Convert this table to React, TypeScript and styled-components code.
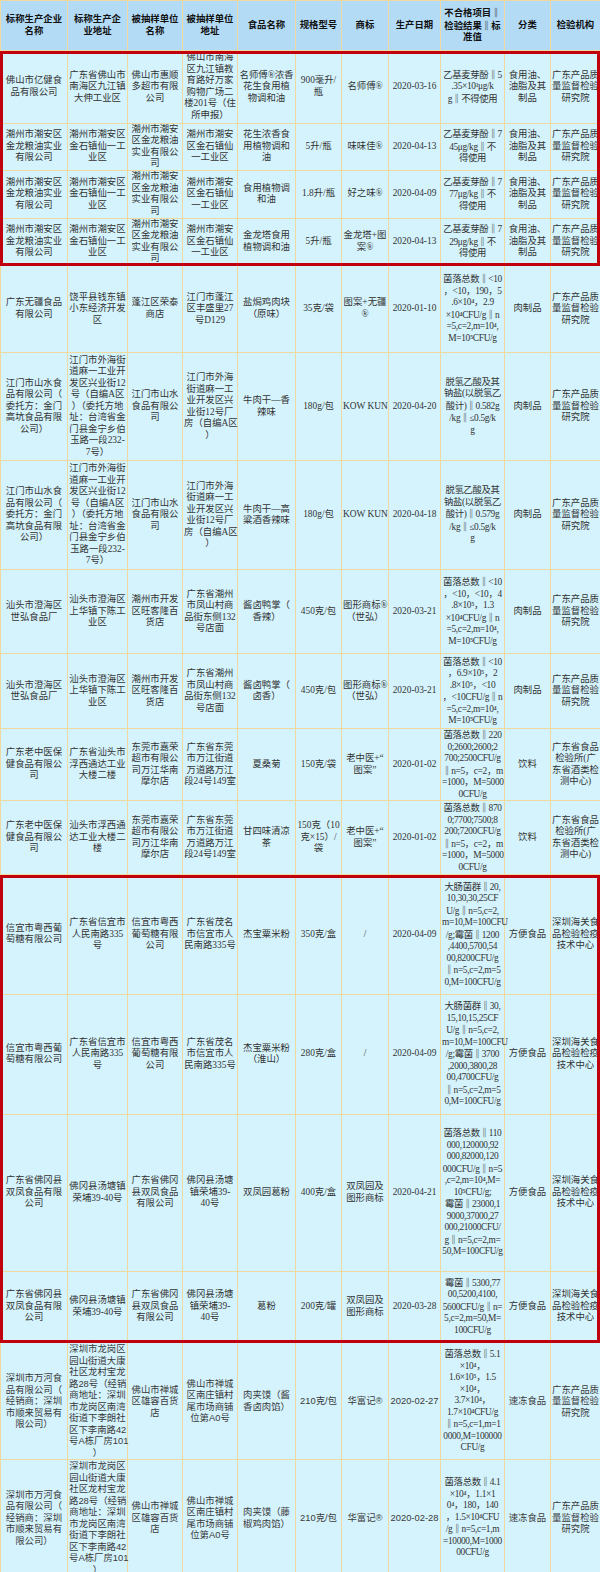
import React from "react";
import styled, { createGlobalStyle, css } from "styled-components";

const GlobalStyle = createGlobalStyle`
  html,
  body {
    margin: 0;
    padding: 0;
    background: #ffffff;
  }
`;

const COLUMNS = [67, 60, 55, 55, 58, 46, 47, 52, 64, 46, 50];
const RESULT_COL = 8;

const HEADINGS = [
  "标称生产企业\n名称",
  "标称生产企\n业地址",
  "被抽样单位\n名称",
  "被抽样单位\n地址",
  "食品名称",
  "规格型号",
  "商标",
  "生产日期",
  "不合格项目‖\n检验结果‖标\n准值",
  "分类",
  "检验机构",
];

// cell texts keep the line breaks of the published sheet
const GDQI = "广东产品质\n量监督检验\n研究院";
const SZCIQ = "深圳海关食\n品检验检疫\n技术中心";
const OIL = "食用油、\n油脂及其\n制品";
const MEAT = "肉制品";
const JL_NAME = "潮州市潮安区\n金龙粮油实业\n有限公司";
const JL_ADDR = "潮州市潮安区\n金石镇仙一工\n业区";
const JL_SITE_NAME = "潮州市潮安\n区金龙粮油\n实业有限公\n司";
const JL_SITE = "潮州市潮安\n区金石镇仙\n一工业区";
const SS_NAME = "江门市山水食\n品有限公司（\n委托方：金门\n高坑食品有限\n公司）";
const SS_ADDR =
  "江门市外海街\n道麻一工业开\n发区兴业街12\n号（自编A区\n）（委托方地\n址：台湾省金\n门县金宁乡伯\n玉路一段232-\n7号）";
const SS_SITE_NAME = "江门市山水\n食品有限公\n司";
const SS_SITE = "江门市外海\n街道麻一工\n业开发区兴\n业街12号厂\n房（自编A区\n）";
const SH_NAME = "汕头市澄海区\n世弘食品厂";
const SH_ADDR = "汕头市澄海区\n上华镇下陈工\n业区";
const WKL = "潮州市开发\n区旺客隆百\n货店";
const WKL_ADDR = "广东省潮州\n市凤山村商\n品街东侧132\n号店面";
const LZY = "广东老中医保\n健食品有限公\n司";
const JR = "东莞市嘉荣\n超市有限公\n司万江华南\n摩尔店";
const JR_ADDR = "广东省东莞\n市万江街道\n万道路万江\n段24号149室";
const GDFI = "广东省食品\n检验所(广\n东省酒类检\n测中心)";
const XY = "信宜市粤西葡\n萄糖有限公司";
const XY_ADDR = "广东省信宜市\n人民南路335\n号";
const XY_SITE_NAME = "信宜市粤西\n葡萄糖有限\n公司";
const XY_SITE = "广东省茂名\n市信宜市人\n民南路335号";
const SF = "广东省佛冈县\n双凤食品有限\n公司";
const SF_ADDR = "佛冈县汤塘镇\n荣埔39-40号";
const SF_SITE_NAME = "广东省佛冈\n县双凤食品\n有限公司";
const SF_SITE = "佛冈县汤塘\n镇荣埔39-\n40号";
const WH = "深圳市万河食\n品有限公司（\n经销商：深圳\n市顺来贸易有\n限公司）";
const WH_ADDR =
  "深圳市龙岗区\n园山街道大康\n社区龙村宝龙\n路28号（经销\n商地址：深圳\n市龙岗区南湾\n街道下李朗社\n区下李南路42\n号A栋厂房101\n）";
const XR = "佛山市禅城\n区雄容百货\n店";
const XR_ADDR = "佛山市禅城\n区南庄镇村\n尾市场商铺\n位第A0号";

interface Record {
  h: number;
  cells: string[];
  sans?: boolean;
}

interface Group {
  flagged?: boolean;
  rows: Record[];
}

const GROUPS: Group[] = [
  {
    flagged: true,
    rows: [
      {
        h: 72,
        cells: [
          "佛山市亿健食\n品有限公司",
          "广东省佛山市\n南海区九江镇\n大伸工业区",
          "佛山市惠顺\n多超市有限\n公司",
          "佛山市南海\n区九江镇教\n育路好万家\n购物广场二\n楼201号（住\n所申报）",
          "名师傅®浓香\n花生食用植\n物调和油",
          "900毫升/\n瓶",
          "名师傅®",
          "2020-03-16",
          "乙基麦芽酚‖5\n.35×10³μg/k\ng‖不得使用",
          OIL,
          GDQI,
        ],
      },
      {
        h: 47,
        cells: [JL_NAME, JL_ADDR, JL_SITE_NAME, JL_SITE, "花生浓香食\n用植物调和\n油", "5升/瓶", "味味佳®", "2020-04-13", "乙基麦芽酚‖7\n45μg/kg‖不\n得使用", OIL, GDQI],
      },
      {
        h: 48,
        cells: [JL_NAME, JL_ADDR, JL_SITE_NAME, JL_SITE, "食用植物调\n和油", "1.8升/瓶", "好之味®", "2020-04-09", "乙基麦芽酚‖7\n77μg/kg‖不\n得使用", OIL, GDQI],
      },
      {
        h: 47,
        cells: [JL_NAME, JL_ADDR, JL_SITE_NAME, JL_SITE, "金龙塔食用\n植物调和油", "5升/瓶", "金龙塔+图\n案®", "2020-04-13", "乙基麦芽酚‖7\n29μg/kg‖不\n得使用", OIL, GDQI],
      },
    ],
  },
  {
    rows: [
      {
        h: 87,
        cells: [
          "广东无疆食品\n有限公司",
          "饶平县钱东镇\n小东经济开发\n区",
          "蓬江区荣泰\n商店",
          "江门市蓬江\n区丰盛里27\n号D129",
          "盐焗鸡肉块\n（原味）",
          "35克/袋",
          "图案+无疆\n®",
          "2020-01-10",
          "菌落总数‖<10\n，<10，190，5\n.6×10⁴，2.9\n×10⁴CFU/g‖n\n=5,c=2,m=10⁴,\nM=10⁵CFU/g",
          MEAT,
          GDQI,
        ],
      },
      {
        h: 108,
        cells: [SS_NAME, SS_ADDR, SS_SITE_NAME, SS_SITE, "牛肉干—香\n辣味", "180g/包", "KOW KUN", "2020-04-20", "脱氢乙酸及其\n钠盐(以脱氢乙\n酸计)‖0.582g\n/kg‖≤0.5g/k\ng", MEAT, GDQI],
      },
      {
        h: 109,
        cells: [SS_NAME, SS_ADDR, SS_SITE_NAME, SS_SITE, "牛肉干—高\n粱酒香辣味", "180g/包", "KOW KUN", "2020-04-18", "脱氢乙酸及其\n钠盐(以脱氢乙\n酸计)‖0.579g\n/kg‖≤0.5g/k\ng", MEAT, GDQI],
      },
      {
        h: 84,
        cells: [SH_NAME, SH_ADDR, WKL, WKL_ADDR, "酱卤鸭掌（\n香辣）", "450克/包", "图形商标®\n（世弘）", "2020-03-21", "菌落总数‖<10\n，<10，<10，4\n.8×10⁵，1.3\n×10⁴CFU/g‖n\n=5,c=2,m=10⁴,\nM=10⁵CFU/g", MEAT, GDQI],
      },
      {
        h: 75,
        cells: [SH_NAME, SH_ADDR, WKL, WKL_ADDR, "酱卤鸭掌（\n卤香）", "450克/包", "图形商标®\n（世弘）", "2020-03-21", "菌落总数‖<10\n，6.9×10⁵，2\n.8×10⁵，<10\n，<10CFU/g‖n\n=5,c=2,m=10⁴,\nM=10⁵CFU/g", MEAT, GDQI],
      },
      {
        h: 71,
        cells: [LZY, "广东省汕头市\n浮西通达工业\n大楼二楼", JR, JR_ADDR, "夏桑菊", "150克/袋", "老中医+“\n图案”", "2020-01-02", "菌落总数‖220\n0;2600;2600;2\n700;2500CFU/g\n‖n=5，c=2，m\n=1000，M=5000\n0CFU/g", "饮料", GDFI],
      },
      {
        h: 74,
        cells: [LZY, "汕头市浮西通\n达工业大楼二\n楼", JR, JR_ADDR, "甘四味清凉\n茶", "150克（10\n克×15）/\n袋", "老中医+“\n图案”", "2020-01-02", "菌落总数‖870\n0;7700;7500;8\n200;7200CFU/g\n‖n=5，c=2，m\n=1000，M=5000\n0CFU/g", "饮料", GDFI],
      },
    ],
  },
  {
    flagged: true,
    rows: [
      {
        h: 119,
        cells: [XY, XY_ADDR, XY_SITE_NAME, XY_SITE, "杰宝粟米粉", "350克/盒", "/", "2020-04-09", "大肠菌群‖20,\n10,30,30,25CF\nU/g‖n=5,c=2,\nm=10,M=100CFU\n/g;霉菌‖1200\n,4400,5700,54\n00,8200CFU/g\n‖n=5,c=2,m=5\n0,M=100CFU/g", "方便食品", SZCIQ],
      },
      {
        h: 120,
        cells: [XY, XY_ADDR, XY_SITE_NAME, XY_SITE, "杰宝粟米粉\n（淮山）", "280克/盒", "/", "2020-04-09", "大肠菌群‖30,\n15,10,15,25CF\nU/g‖n=5,c=2,\nm=10,M=100CFU\n/g;霉菌‖3700\n,2000,3800,28\n00,4700CFU/g\n‖n=5,c=2,m=5\n0,M=100CFU/g", "方便食品", SZCIQ],
      },
      {
        h: 157,
        cells: [SF, SF_ADDR, SF_SITE_NAME, SF_SITE, "双凤园葛粉", "400克/盒", "双凤园及\n图形商标", "2020-04-21", "菌落总数‖110\n000,120000,92\n000,82000,120\n000CFU/g‖n=5\n,c=2,m=10⁴,M=\n10⁵CFU/g;\n霉菌‖23000,1\n9000,37000,27\n000,21000CFU/\ng‖n=5,c=2,m=\n50,M=100CFU/g", "方便食品", SZCIQ],
      },
      {
        h: 71,
        cells: [SF, SF_ADDR, SF_SITE_NAME, SF_SITE, "葛粉", "200克/罐", "双凤园及\n图形商标", "2020-03-28", "霉菌‖5300,77\n00,5200,4100,\n5600CFU/g‖n=\n5,c=2,m=50,M=\n100CFU/g", "方便食品", SZCIQ],
      },
    ],
  },
  {
    rows: [
      {
        h: 117,
        sans: true,
        cells: [WH, WH_ADDR, XR, XR_ADDR, "肉夹馍（酱\n香卤肉馅）", "210克/包", "华富记®", "2020-02-27", "菌落总数‖5.1\n×10⁴，\n1.6×10⁵，1.5\n×10⁴，\n3.7×10⁴，\n1.7×10⁴CFU/g\n‖n=5,c=1,m=1\n0000,M=100000\nCFU/g", "速冻食品", GDQI],
      },
      {
        h: 116,
        sans: true,
        cells: [WH, WH_ADDR, XR, XR_ADDR, "肉夹馍（藤\n椒鸡肉馅）", "210克/包", "华富记®", "2020-02-28", "菌落总数‖4.1\n×10⁴，1.1×1\n0⁴，180，140\n，1.5×10⁴CFU\n/g‖n=5,c=1,m\n=10000,M=1000\n00CFU/g", "速冻食品", GDQI],
      },
    ],
  },
];

const Sheet = styled.div`
  width: 600px;
  overflow: hidden;
`;

const Grid = styled.table`
  width: 600px;
  table-layout: fixed;
  border-collapse: collapse;
  font-family: "Liberation Serif", "Noto Sans CJK SC", serif;
  font-size: 9.4px;
  line-height: 11.5px;
  color: #333333;
`;

const Row = styled.tr<{ $h: number }>`
  height: ${({ $h }) => $h}px;
`;

const Heading = styled.th`
  padding: 0 1px;
  background: #b3dbf6;
  border: 1px solid #efd99e;
  color: #111111;
  font-weight: bold;
  text-align: center;
  vertical-align: middle;
  white-space: pre;
`;

const Cell = styled.td<{ $sans?: boolean; $dense?: boolean }>`
  padding: 0 1px;
  background: #d5f3fd;
  border: 1px solid #efd99e;
  border-top: 0;
  text-align: center;
  vertical-align: middle;
  white-space: pre;

  ${({ $dense }) =>
    $dense &&
    css`
      letter-spacing: -0.35px;
    `}

  ${({ $sans }) =>
    $sans &&
    css`
      font-family: "Liberation Sans", "Noto Sans CJK SC", sans-serif;
      color: #3a3a3a;
    `}
`;

const Sep = styled.span`
  font-family: "Noto Sans CJK SC", sans-serif;
  font-weight: bold;
`;

const Block = styled.div<{ $flagged?: boolean }>`
  position: relative;

  ${({ $flagged }) =>
    $flagged &&
    css`
      &::after {
        content: "";
        position: absolute;
        inset: 0;
        border: 3px solid #c0000c;
        pointer-events: none;
      }
    `}
`;

function Columns() {
  return (
    <colgroup>
      {COLUMNS.map((w, i) => (
        <col key={i} style={{ width: w }} />
      ))}
    </colgroup>
  );
}

// the "‖" separators are full-width bars in the sheet
function Text({ value }: { value: string }) {
  const parts = value.split("‖");
  return (
    <>
      {parts.map((part, i) => (
        <React.Fragment key={i}>
          {i > 0 && <Sep>‖</Sep>}
          {part}
        </React.Fragment>
      ))}
    </>
  );
}

export default function App() {
  return (
    <>
      <GlobalStyle />
      <Sheet>
        <Grid>
          <Columns />
          <thead>
            <Row $h={50}>
              {HEADINGS.map((h) => (
                <Heading key={h}>
                  <Text value={h} />
                </Heading>
              ))}
            </Row>
          </thead>
        </Grid>
        {GROUPS.map((group, gi) => (
          <Block key={gi} $flagged={group.flagged}>
            <Grid>
              <Columns />
              <tbody>
                {group.rows.map((row, ri) => (
                  <Row key={ri} $h={row.h}>
                    {row.cells.map((text, ci) => (
                      <Cell
                        key={ci}
                        $dense={ci === RESULT_COL}
                        $sans={row.sans && ci !== RESULT_COL}
                      >
                        <Text value={text} />
                      </Cell>
                    ))}
                  </Row>
                ))}
              </tbody>
            </Grid>
          </Block>
        ))}
      </Sheet>
    </>
  );
}
